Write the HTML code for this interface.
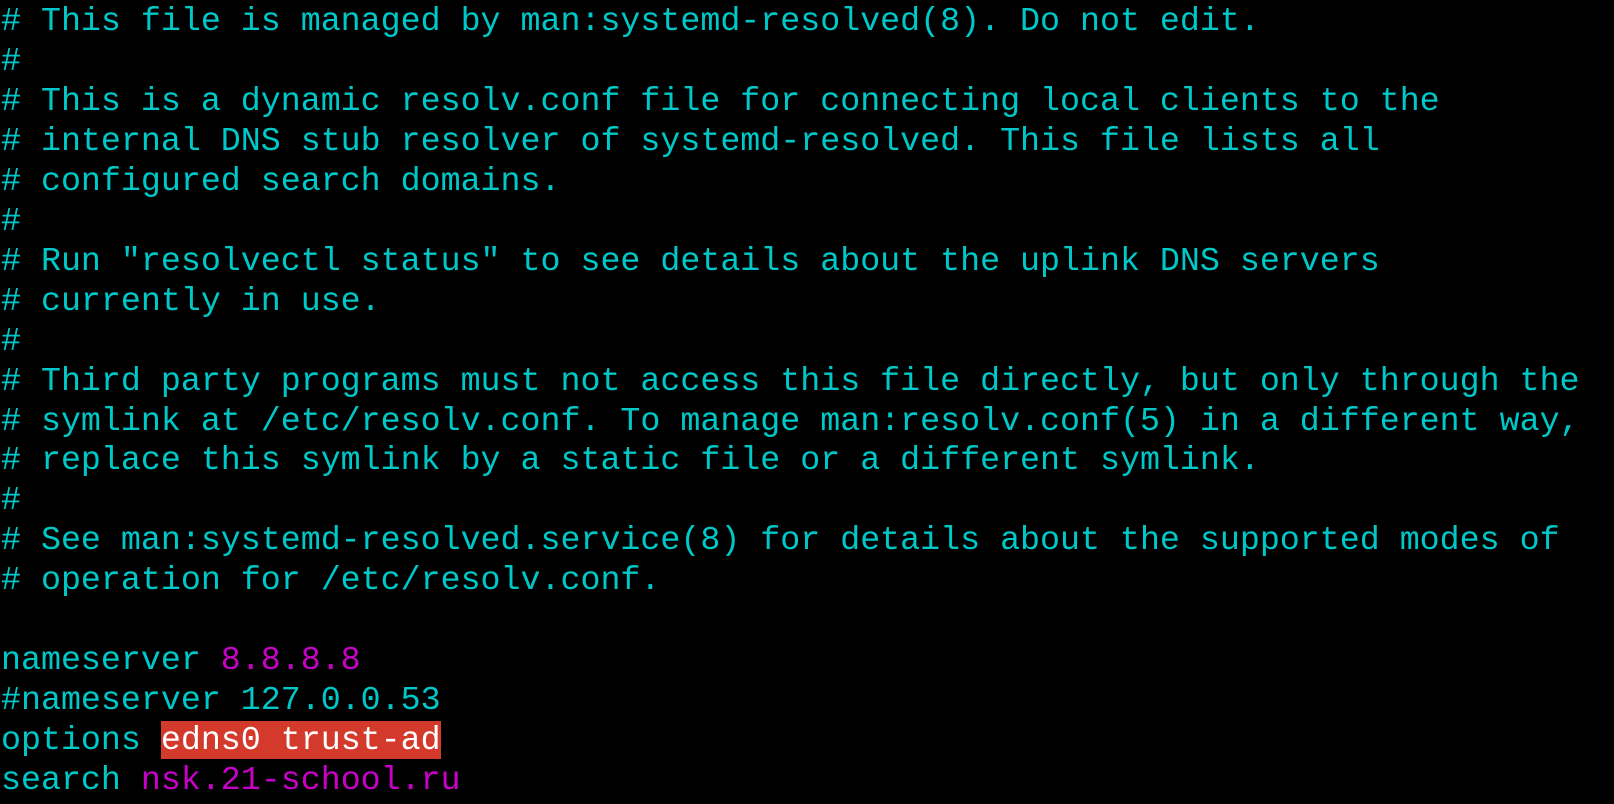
<!DOCTYPE html>
<html><head><meta charset="utf-8"><style>
html,body{margin:0;padding:0;background:#000;width:1614px;height:804px;overflow:hidden}
pre{margin:0;padding:2px 0 0 1px;font-family:"Liberation Mono","DejaVu Sans Mono",monospace;font-size:33.3px;line-height:39.95px;color:#00c8c8;letter-spacing:0;white-space:pre}
.m{color:#c800c8}
.h{background:#d33a2c;color:#fff}
</style></head><body><pre># This file is managed by man:systemd-resolved(8). Do not edit.
#
# This is a dynamic resolv.conf file for connecting local clients to the
# internal DNS stub resolver of systemd-resolved. This file lists all
# configured search domains.
#
# Run "resolvectl status" to see details about the uplink DNS servers
# currently in use.
#
# Third party programs must not access this file directly, but only through the
# symlink at /etc/resolv.conf. To manage man:resolv.conf(5) in a different way,
# replace this symlink by a static file or a different symlink.
#
# See man:systemd-resolved.service(8) for details about the supported modes of
# operation for /etc/resolv.conf.

nameserver <span class="m">8.8.8.8</span>
#nameserver 127.0.0.53
options <span class="h">edns0 trust-ad</span>
search <span class="m">nsk.21-school.ru</span></pre></body></html>
